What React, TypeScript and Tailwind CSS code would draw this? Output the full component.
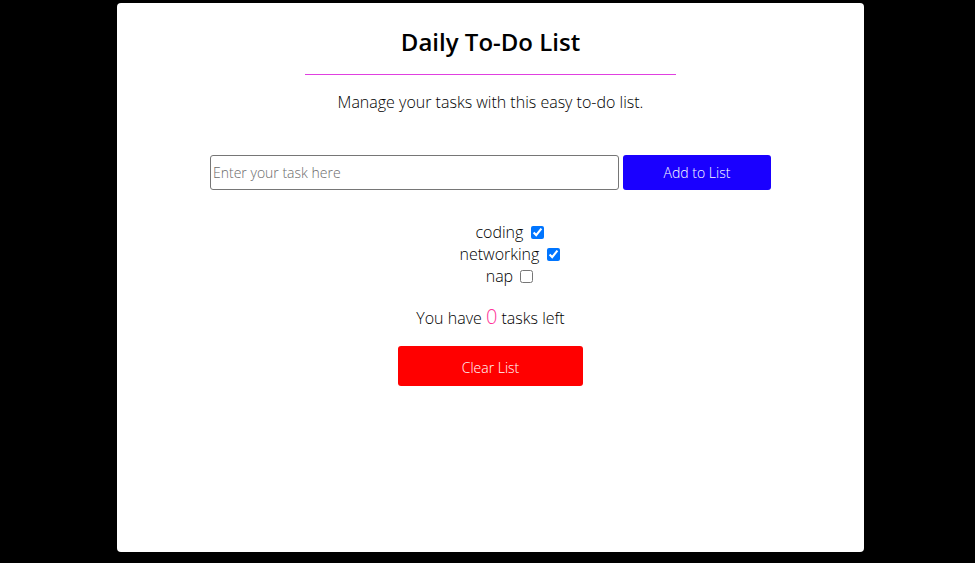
import { useState } from 'react'

interface Task {
  label: string
  done: boolean
}

const INITIAL: Task[] = [
  { label: 'coding', done: true },
  { label: 'networking', done: true },
  { label: 'nap', done: false },
]

export default function App() {
  const [tasks, setTasks] = useState<Task[]>(INITIAL)
  const left = 0

  const toggle = (i: number) =>
    setTasks((prev) => prev.map((t, j) => (j === i ? { ...t, done: !t.done } : t)))

  return (
    <div className="min-h-[563px] w-full bg-black pl-[117px] pt-[3px] font-['Open_Sans',sans-serif] text-black">
      <div className="flex h-[549px] w-[747px] flex-col items-center rounded-[4px] bg-white pt-[23px]">
        <h1 className="text-[24px] font-semibold leading-[32px]">Daily To-Do List</h1>
        <div className="mt-[16px] h-px w-[371px] bg-[#e040e0]" />
        <p className="mt-[15px] text-[16px] font-light leading-[24px]">
          Manage your tasks with this easy to-do list.
        </p>

        <div className="mt-[41px] flex gap-[4px]">
          <input
            type="text"
            placeholder="Enter your task here"
            className="h-[35px] w-[409px] rounded-[3px] border border-[#767676] px-[2px] text-[14px] font-light placeholder:text-[#6b6b6b]"
          />
          <button className="h-[35px] w-[148px] rounded-[3px] bg-[#1a00ff] text-[14px] font-light text-white">
            Add to List
          </button>
        </div>

        <ul className="mt-[31px] flex flex-col items-center pl-[38px] text-[16px] font-light leading-[22px]">
          {tasks.map((t, i) => (
            <li key={t.label}>
              {t.label}{' '}
              <input type="checkbox" checked={t.done} onChange={() => toggle(i)} className="ml-[3px] align-[-1px]" />
            </li>
          ))}
        </ul>

        <p className="mt-[16px] text-[16px] font-light leading-[28px]">
          You have <span className="text-[20px] text-[#ff3399]">{left}</span> tasks left
        </p>

        <button
          onClick={() => setTasks([])}
          className="mt-[14px] h-[40px] w-[185px] rounded-[3px] bg-[#ff0000] pt-[2px] text-[14px] font-light text-white"
        >
          Clear List
        </button>
      </div>
    </div>
  )
}
